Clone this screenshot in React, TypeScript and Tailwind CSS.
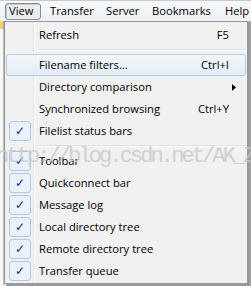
import React from 'react';

type Item =
  | { kind: 'sep' }
  | { kind: 'item'; label: string; shortcut?: string; checked?: boolean; submenu?: boolean; hot?: boolean };

const items: Item[] = [
  { kind: 'item', label: 'Refresh', shortcut: 'F5' },
  { kind: 'sep' },
  { kind: 'item', label: 'Filename filters...', shortcut: 'Ctrl+I', hot: true },
  { kind: 'item', label: 'Directory comparison', submenu: true },
  { kind: 'item', label: 'Synchronized browsing', shortcut: 'Ctrl+Y' },
  { kind: 'item', label: 'Filelist status bars', checked: true },
  { kind: 'sep' },
  { kind: 'item', label: 'Toolbar', checked: true },
  { kind: 'item', label: 'Quickconnect bar', checked: true },
  { kind: 'item', label: 'Message log', checked: true },
  { kind: 'item', label: 'Local directory tree', checked: true },
  { kind: 'item', label: 'Remote directory tree', checked: true },
  { kind: 'item', label: 'Transfer queue', checked: true },
];

function Row({ item }: { item: Extract<Item, { kind: 'item' }> }) {
  return (
    <div
      className={`relative z-10 flex h-[22px] items-center rounded-[3px] border ${
        item.hot ? 'border-[#b4cfe9] bg-[linear-gradient(#f3f7fc,#e4ecf6)]' : 'border-transparent'
      }`}
    >
      <div className="flex w-[25px] justify-center">
        {item.checked && (
          <div className="flex h-[20px] w-[22px] items-center justify-center rounded-[3px] border border-[#afc8e6] bg-[#eaf1fa] text-[12px] leading-none text-[#1b2f86]">
            ✓
          </div>
        )}
      </div>
      <span className="ml-[7px] flex-1">{item.label}</span>
      {item.shortcut && <span className="mr-[16px]">{item.shortcut}</span>}
      {item.submenu && (
        <svg width="4" height="7" viewBox="0 0 4 7" className="mr-[9px]">
          <path d="M0 0 L4 3.5 L0 7 Z" fill="#000" />
        </svg>
      )}
    </div>
  );
}

export default function App() {
  return (
    <div
      className="relative h-[286px] w-[251px] overflow-hidden bg-[#f0f0f0] text-[11.2px] text-black"
      style={{ fontFamily: '"Open Sans", "Noto Sans", sans-serif' }}
    >
      {/* menu bar */}
      <div className="flex h-[21px] items-center border-t border-[#c8c8c8] bg-[linear-gradient(#f6f8fb,#eef1f5)] pl-[5px]">
        <div className="flex h-[17px] w-[36px] items-center rounded-[3px] border border-[#8d8d8d] bg-[#e8ecf1] px-[3px] shadow-[inset_1px_1px_0_#c9c9c9]">
          View
        </div>
        <span className="ml-[9px] w-[56px]">Transfer</span>
        <span className="w-[46px]">Server</span>
        <span className="w-[73px]">Bookmarks</span>
        <span>Help</span>
      </div>

      <div className="flex h-[265px]">
        {/* app behind, left */}
        <div className="flex w-[4px] flex-col bg-white">
          <div className="h-[8px] border-r border-[#a0a0a0] bg-[#f3d26a]" />
          <div className="flex-1 border-r border-[#bcbcbc] bg-[#f7f7f7]" />
        </div>

        {/* drop-down */}
        <div className="relative h-[263px] w-[244px] border border-[#979797] bg-[#f1f1f1] px-[1px] pt-[2px] shadow-[2px_2px_0_#9a9a9a]">
          <div className="pointer-events-none absolute bottom-0 left-[28px] top-0 w-[2px] border-l border-[#e2e3e3] bg-white" />
          {items.map((it, i) =>
            it.kind === 'sep' ? (
              <div key={i} className="flex h-[8px] items-center pl-[31px]">
                <div className="h-[2px] w-full border-t border-[#e0e0e0] bg-white" />
              </div>
            ) : (
              <Row key={i} item={it} />
            )
          )}
        </div>
        <div className="w-[3px] bg-[#a9a9a9]" />
      </div>

      {/* watermark */}
      <div
        className="pointer-events-none absolute left-[-4px] top-[140px] z-20 whitespace-nowrap text-[22px] tracking-[-2.9px] text-[#c9c9c9] opacity-80"
        style={{ fontFamily: '"Liberation Mono", "DejaVu Sans Mono", monospace' }}
      >
        http://blog.csdn.net/AK_Zh
      </div>
    </div>
  );
}
